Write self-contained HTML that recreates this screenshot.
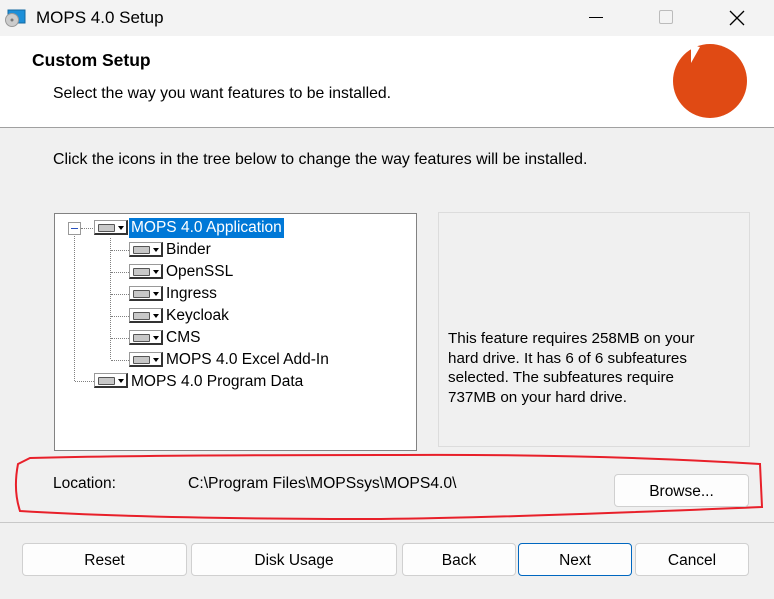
<!DOCTYPE html>
<html><head><meta charset="utf-8"><style>
*{margin:0;padding:0;box-sizing:border-box}
body{width:774px;height:599px;background:#f0f0f0;font-family:"Liberation Sans",sans-serif;color:#000;position:relative;overflow:hidden;font-size:15px}
.a{position:absolute;white-space:nowrap}
.btn{position:absolute;background:#fdfdfd;border:1px solid #d0d0d0;border-radius:4px;text-align:center;font-size:15.5px;line-height:31px;padding-top:1px}
.dev{position:absolute;width:34px;height:15px;border:1px solid #999;background:#fff;border-right:2px solid #333;border-bottom:2px solid #333}
.dev::before{content:"";position:absolute;left:3px;top:3px;width:15px;height:6px;background:#c8c8c8;border:1px solid #555;border-radius:1px}
.dev::after{content:"";position:absolute;left:23px;top:5px;border:3px solid transparent;border-top:4px solid #000}
.t{position:absolute;font-size:15.5px}
.vl{position:absolute;border-left:1px dotted #808080}
</style></head><body>
<div class="a" style="left:0;top:0;width:774px;height:36px;background:#f3f3f3"></div>
<svg class="a" style="left:4px;top:8px" width="22" height="20"><rect x="4" y="2" width="17" height="13" fill="#1d8fd8" stroke="#146aa2"/><circle cx="8" cy="12" r="6.5" fill="#ccc" stroke="#999"/><circle cx="8" cy="12" r="1.5" fill="#777"/></svg>
<div class="a" style="left:36px;top:8px;font-size:17px">MOPS 4.0 Setup</div>
<div class="a" style="left:589px;top:17px;width:14px;border-top:1px solid #000"></div>
<div class="a" style="left:659px;top:10px;width:14px;height:14px;border:1px solid #bbb;border-radius:2px"></div>
<svg class="a" style="left:729px;top:10px" width="16" height="16"><path d="M1 1L15 15M15 1L1 15" stroke="#000" stroke-width="1.3"/></svg>
<div class="a" style="left:0;top:36px;width:774px;height:92px;background:#fff;border-bottom:1px solid #a0a0a0"></div>
<div class="a" style="left:32px;top:50px;font-weight:bold;font-size:17.5px">Custom Setup</div>
<div class="a" style="left:53px;top:85px;font-size:15.8px">Select the way you want features to be installed.</div>
<svg class="a" style="left:672px;top:42px" width="78" height="80"><circle cx="38" cy="39" r="37" fill="#e04a14"/><polygon points="19,3 28,5 19,21" fill="#fff"/></svg>
<div class="a" style="left:53px;top:151px;font-size:15.9px">Click the icons in the tree below to change the way features will be installed.</div>
<div class="a" style="left:54px;top:213px;width:363px;height:238px;background:#fff;border:1px solid #828282"></div>
<div class="vl" style="left:74px;top:234px;height:147px"></div>
<div class="vl" style="left:110px;top:238px;height:121px"></div>
<div class="a" style="left:68px;top:222px;width:13px;height:13px;border:1px solid #999;background:#fff"><div style="position:absolute;left:2px;top:5px;width:7px;border-top:1px solid #2a52be"></div></div>
<div class="a" style="left:81px;top:228px;width:14px;border-top:1px dotted #808080"></div>
<div class="dev" style="left:94px;top:220px"></div>
<div class="a" style="left:129px;top:218px;background:#0078d7;color:#fff;padding:1px 2px;font-size:15.5px">MOPS 4.0 Application</div>
<div class="a" style="left:111px;top:250px;width:18px;border-top:1px dotted #808080"></div><div class="dev" style="left:129px;top:242px"></div><div class="t" style="left:166px;top:241px">Binder</div>
<div class="a" style="left:111px;top:272px;width:18px;border-top:1px dotted #808080"></div><div class="dev" style="left:129px;top:264px"></div><div class="t" style="left:166px;top:263px">OpenSSL</div>
<div class="a" style="left:111px;top:294px;width:18px;border-top:1px dotted #808080"></div><div class="dev" style="left:129px;top:286px"></div><div class="t" style="left:166px;top:285px">Ingress</div>
<div class="a" style="left:111px;top:316px;width:18px;border-top:1px dotted #808080"></div><div class="dev" style="left:129px;top:308px"></div><div class="t" style="left:166px;top:307px">Keycloak</div>
<div class="a" style="left:111px;top:338px;width:18px;border-top:1px dotted #808080"></div><div class="dev" style="left:129px;top:330px"></div><div class="t" style="left:166px;top:329px">CMS</div>
<div class="a" style="left:111px;top:360px;width:18px;border-top:1px dotted #808080"></div><div class="dev" style="left:129px;top:352px"></div><div class="t" style="left:166px;top:351px">MOPS 4.0 Excel Add-In</div>
<div class="a" style="left:75px;top:381px;width:19px;border-top:1px dotted #808080"></div><div class="dev" style="left:94px;top:373px"></div><div class="t" style="left:131px;top:373px">MOPS 4.0 Program Data</div>
<div class="a" style="left:438px;top:212px;width:312px;height:235px;border:1px solid #dcdcdc"></div>
<div class="a" style="left:448px;top:329px;line-height:19.5px;font-size:15.2px">This feature requires 258MB on your<br>hard drive. It has 6 of 6 subfeatures<br>selected. The subfeatures require<br>737MB on your hard drive.</div>
<svg class="a" style="left:0;top:450px" width="774" height="75"><path d="M30 8Q150 5 400 5Q600 4 760 14L762 57Q500 68 380 69Q150 69 20 61Q13 40 18 14Z" fill="none" stroke="#e8202a" stroke-width="2"/></svg>
<div class="a" style="left:53px;top:475px;font-size:15.5px">Location:</div>
<div class="a" style="left:188px;top:475px;font-size:15.7px">C:\Program Files\MOPSsys\MOPS4.0\</div>
<div class="btn" style="left:614px;top:474px;width:135px;height:33px">Browse...</div>
<div class="a" style="left:0;top:522px;width:774px;border-top:1px solid #c8c8c8"></div>
<div class="btn" style="left:22px;top:543px;width:165px;height:33px">Reset</div>
<div class="btn" style="left:191px;top:543px;width:206px;height:33px">Disk Usage</div>
<div class="btn" style="left:402px;top:543px;width:114px;height:33px">Back</div>
<div class="btn" style="left:518px;top:543px;width:114px;height:33px;border-color:#0067c0">Next</div>
<div class="btn" style="left:635px;top:543px;width:114px;height:33px">Cancel</div>
</body></html>
